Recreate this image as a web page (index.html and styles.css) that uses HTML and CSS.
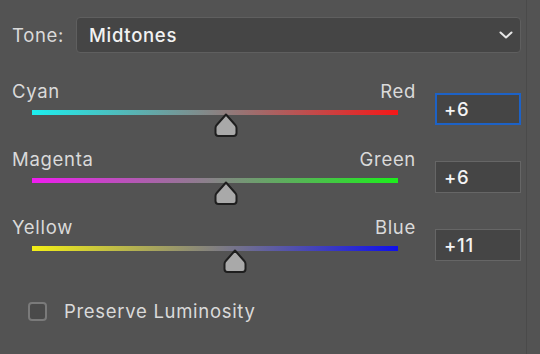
FILE: index.html
```html
<!DOCTYPE html>
<html lang="en">
<head>
    <meta charset="UTF-8">
    <title>Color Balance</title>
    <link rel="stylesheet" href="styles.css">
</head>
<body>
<div class="panel">
    <div class="tone-row">
        <span class="tone-label">Tone:</span>
        <div class="select">
            <span>Midtones</span>
            <svg class="chevron" width="14" height="8" viewBox="0 0 14 8"><path d="M1.5 1.5 L7 6.5 L12.5 1.5" fill="none" stroke="#e6e6e6" stroke-width="2" stroke-linecap="round" stroke-linejoin="round"/></svg>
        </div>
    </div>

    <div class="balance">
        <div class="balance-row">
            <div class="slider">
                <div class="ends"><span>Cyan</span><span>Red</span></div>
                <div class="track cyan-red">
                    <svg class="thumb" style="left: 53%" width="24" height="24" viewBox="0 0 24 24"><path d="M12 1.5 L21.3 12 Q22.5 13.2 22.5 15 V20 Q22.5 23 19.5 23 H4.5 Q1.5 23 1.5 20 V15 Q1.5 13.2 2.7 12 Z"/></svg>
                </div>
            </div>
            <div class="value focused">+6</div>
        </div>
        <div class="balance-row">
            <div class="slider">
                <div class="ends"><span>Magenta</span><span>Green</span></div>
                <div class="track magenta-green">
                    <svg class="thumb" style="left: 53%" width="24" height="24" viewBox="0 0 24 24"><path d="M12 1.5 L21.3 12 Q22.5 13.2 22.5 15 V20 Q22.5 23 19.5 23 H4.5 Q1.5 23 1.5 20 V15 Q1.5 13.2 2.7 12 Z"/></svg>
                </div>
            </div>
            <div class="value">+6</div>
        </div>
        <div class="balance-row">
            <div class="slider">
                <div class="ends"><span>Yellow</span><span>Blue</span></div>
                <div class="track yellow-blue">
                    <svg class="thumb" style="left: 55.5%" width="24" height="24" viewBox="0 0 24 24"><path d="M12 1.5 L21.3 12 Q22.5 13.2 22.5 15 V20 Q22.5 23 19.5 23 H4.5 Q1.5 23 1.5 20 V15 Q1.5 13.2 2.7 12 Z"/></svg>
                </div>
            </div>
            <div class="value">+11</div>
        </div>
    </div>

    <label class="check">
        <span class="box"></span>
        <span>Preserve Luminosity</span>
    </label>
</div>
</body>
</html>
```

FILE: styles.css
```css
body {
    margin: 0;
    background: #535353;
    font-family: Inter, "Noto Sans", sans-serif;
    font-size: 18.5px;
    letter-spacing: 0.7px;
    color: #dadada;
}
.panel {
    width: 527px;
    height: 354px;
    box-sizing: border-box;
    border-right: 1px solid #4a4a4a;
    padding: 17px 0 0 12px;
    display: flex;
    flex-direction: column;
}
.tone-row {
    display: flex;
    align-items: center;
}
.tone-label {
    width: 64px;
}
.select {
    width: 445px;
    height: 36px;
    box-sizing: border-box;
    border: 1px solid #5f5f5f;
    border-radius: 4px;
    background: #454545;
    padding: 0 7px 0 12px;
    display: flex;
    align-items: center;
    justify-content: space-between;
    color: #f2f2f2;
    font-weight: 500;
}
.balance {
    margin-top: 27px;
}
.balance-row {
    display: grid;
    grid-template-columns: 404px 86px;
    column-gap: 19px;
    align-items: start;
    height: 68px;
}
.ends {
    display: flex;
    justify-content: space-between;
    line-height: 22px;
    height: 22px;
}
.track {
    position: relative;
    height: 5px;
    margin: 8px 18px 0 20px;
}
.cyan-red {
    background: linear-gradient(to right, #1cefef, #f51818);
}
.magenta-green {
    background: linear-gradient(to right, #f01cf0, #1cef1c);
}
.yellow-blue {
    background: linear-gradient(to right, #f3ef16, #1010ea);
}
.thumb {
    position: absolute;
    top: 3px;
    transform: translateX(-50%);
    fill: #a9a9a9;
    stroke: #1e1e1e;
    stroke-width: 2;
    stroke-linejoin: round;
}
.value {
    margin-top: 13px;
    height: 32px;
    box-sizing: border-box;
    border: 1px solid #666;
    background: #454545;
    padding-left: 8px;
    line-height: 30px;
    color: #f4f4f4;
    font-weight: 500;
}
.value.focused {
    border: 2px solid #1d62c6;
    padding-left: 7px;
    line-height: 28px;
}
.check {
    margin: 16px 0 0 16px;
    display: flex;
    align-items: center;
    gap: 17px;
    line-height: 22px;
}
.box {
    width: 19px;
    height: 19px;
    box-sizing: border-box;
    border: 2px solid #7a7a7a;
    border-radius: 4px;
    background: #4a4a4a;
}
```
